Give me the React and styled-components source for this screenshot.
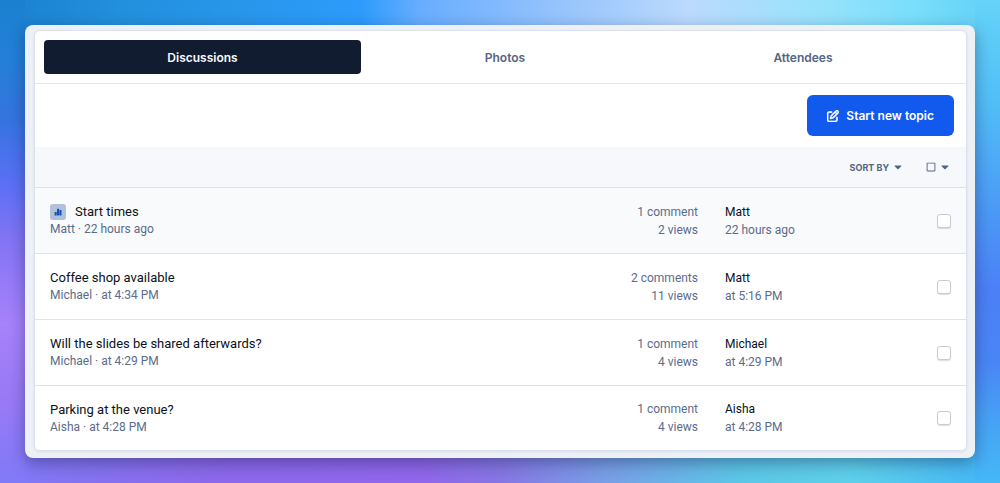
import React from "react";
import styled, { createGlobalStyle } from "styled-components";
import { FaCaretDown, FaRegSquare } from "react-icons/fa";
import { FaRegPenToSquare } from "react-icons/fa6";

const GlobalStyle = createGlobalStyle`
  * {
    box-sizing: border-box;
  }

  body {
    margin: 0;
    font-family: Inter, "Liberation Sans", sans-serif;
    font-size: 12px;
    color: #0f172a;
  }

  button, input {
    font: inherit;
  }
`

const Page = styled.div`
  min-height: 100vh;
  padding: 25px;
  background:
    linear-gradient(to bottom, #1b80d0 0%, #2380d8 12%, #3474de 24%, #5b70f6 38%, #8474f4 50%, #a682fb 67%, #9a7af6 82%, #8079f8 100%) left / 25px 100% no-repeat,
    linear-gradient(to bottom, #66d3f8 0%, #52c0f7 20%, #4c9cf6 42%, #4c80f7 60%, #4a86f6 75%, #47a4f5 88%, #45b8f5 100%) right / 25px 100% no-repeat,
    linear-gradient(to right, #1b80d0 0%, #2290dc 12%, #2896ea 24%, #2c9bfb 36%, #68adff 42%, #93c2fc 55%, #bbdafd 69%, #98e2fb 82%, #7adffb 91%, #66d3f8 98%) top / 100% 50% no-repeat,
    linear-gradient(to right, #8079f8 2%, #8474f0 7%, #8c68ea 22%, #9066ea 42%, #8676e4 50%, #78a0e6 61%, #5cc6e6 74%, #5ed0ea 85%, #45b8f5 98%) bottom / 100% 50% no-repeat;
`

const Frame = styled.div`
  padding: 5px 8px 7px 9px;
  border-radius: 8px;
  background: #edf1f6;
  box-shadow: 0 5px 16px rgba(15, 23, 62, 0.4);
`

const Card = styled.main`
  border: 1px solid #dbe2ed;
  border-radius: 6px;
  background: white;
  overflow: hidden;
  box-shadow: 0 1px 3px rgba(15, 23, 42, 0.08);
`

const Tabs = styled.nav`
  display: flex;
  padding: 9px;
  border-bottom: 1px solid #e2e8f0;
`

const Tab = styled.button`
  flex: 1 1 ${props => props.$basis};
  height: 34px;
  padding: 0;
  border: 0;
  border-radius: 4px;
  font-weight: 600;
  color: ${props => props.$active ? "#f8fafc" : "#546582"};
  background: ${props => props.$active ? "#111c30" : "transparent"};
`

const Actions = styled.div`
  display: flex;
  justify-content: flex-end;
  padding: 11px 12px;
`

const NewTopic = styled.button`
  display: flex;
  align-items: center;
  justify-content: center;
  gap: 7px;
  height: 41px;
  padding: 0 20px;
  border: 0;
  border-radius: 6px;
  font-weight: 600;
  color: white;
  background: #125aee;

  svg {
    stroke: currentColor;
    stroke-width: 24px;
  }
`

const Toolbar = styled.div`
  display: flex;
  align-items: center;
  justify-content: flex-end;
  gap: 22px;
  height: 41px;
  padding: 0 15px;
  border-bottom: 1px solid #dbe2ee;
  background: #f6f8fc;
`

const MenuButton = styled.button`
  display: flex;
  align-items: center;
  gap: 3px;
  padding: 0;
  border: 0;
  font-size: 9px;
  font-weight: 700;
  color: #546582;
  background: transparent;
`

const Topics = styled.ul`
  margin: 0;
  padding: 0;
  list-style: none;
`

const Topic = styled.li`
  display: grid;
  grid-template-columns: 1fr 120px 239px 14px;
  align-items: center;
  height: 66px;
  padding: 0 15px;
  border-bottom: 1px solid #dde4ee;
  font-family: Roboto, "Liberation Sans", sans-serif;
  line-height: 18px;
  color: #5b6c8a;
  background: ${props => props.$unread ? "#f9fafc" : "white"};

  &:last-child {
    height: 64px;
    border-bottom: 0;
  }
`

const Title = styled.h2`
  display: flex;
  align-items: center;
  gap: 9px;
  margin: 0;
  font-size: 13px;
  font-weight: 400;
  line-height: 17px;
  color: #0b1220;
`

const PollBadge = styled.span`
  display: flex;
  align-items: center;
  justify-content: center;
  width: 16px;
  height: 16px;
  border-radius: 3px;
  background: #b1c1da;
`

const Counts = styled.div`
  text-align: right;
`

const LastReply = styled.div`
  padding-left: 27px;
`

const Name = styled.div`
  color: #0b1220;
`

const Checkbox = styled.input`
  appearance: none;
  width: 14px;
  height: 14px;
  margin: 0;
  border: 1px solid #c6ccd6;
  border-radius: 3px;
  background: white;
  box-shadow: 0 1px 1px rgba(15, 23, 42, 0.14);
`

const topics = [
  { title: "Start times", author: "Matt", posted: "22 hours ago", comments: "1 comment", views: 2, last: "Matt", replied: "22 hours ago", poll: true },
  { title: "Coffee shop available", author: "Michael", posted: "at 4:34 PM", comments: "2 comments", views: 11, last: "Matt", replied: "at 5:16 PM" },
  { title: "Will the slides be shared afterwards?", author: "Michael", posted: "at 4:29 PM", comments: "1 comment", views: 4, last: "Michael", replied: "at 4:29 PM" },
  { title: "Parking at the venue?", author: "Aisha", posted: "at 4:28 PM", comments: "1 comment", views: 4, last: "Aisha", replied: "at 4:28 PM" },
]

const PollIcon = () => (
  <svg width="8" height="8" viewBox="0 0 8 8" fill="#1750b8">
    <rect x="0.6" y="4" width="2.1" height="3.4" rx="0.3" />
    <rect x="3" y="0.8" width="2.1" height="6.6" rx="0.3" />
    <rect x="5.4" y="2" width="2.1" height="5.4" rx="0.3" />
  </svg>
)

const App = () => (
  <Page>
    <GlobalStyle />
    <Frame>
      <Card>
        <Tabs>
          <Tab $active $basis="317px">Discussions</Tab>
          <Tab $basis="288px">Photos</Tab>
          <Tab $basis="308px">Attendees</Tab>
        </Tabs>
        <Actions>
          <NewTopic><FaRegPenToSquare size={12} />Start new topic</NewTopic>
        </Actions>
        <Toolbar>
          <MenuButton>SORT BY <FaCaretDown size={12} /></MenuButton>
          <MenuButton aria-label="Select topics"><FaRegSquare size={10} /><FaCaretDown size={12} /></MenuButton>
        </Toolbar>
        <Topics>
          {topics.map(topic => (
            <Topic key={topic.title} $unread={topic.poll}>
              <div>
                <Title>{topic.poll && <PollBadge><PollIcon /></PollBadge>}{topic.title}</Title>
                <div>{topic.author} · {topic.posted}</div>
              </div>
              <Counts>
                <div>{topic.comments}</div>
                <div>{topic.views} views</div>
              </Counts>
              <LastReply>
                <Name>{topic.last}</Name>
                <div>{topic.replied}</div>
              </LastReply>
              <Checkbox type="checkbox" aria-label={topic.title} />
            </Topic>
          ))}
        </Topics>
      </Card>
    </Frame>
  </Page>
)

export default App
